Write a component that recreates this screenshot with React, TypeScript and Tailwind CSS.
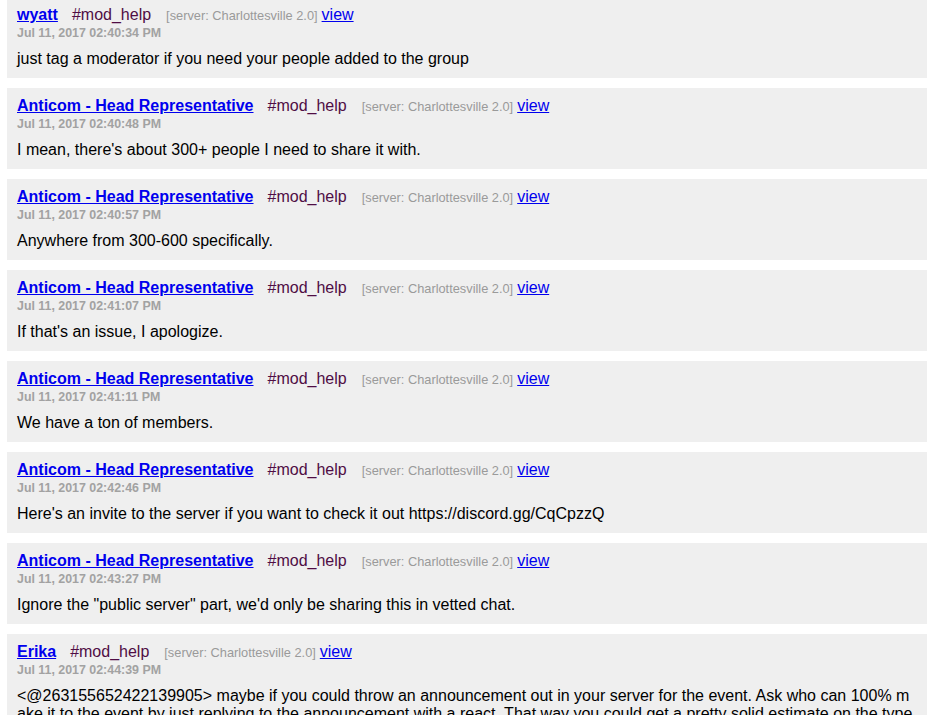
const messages = [
  {
    name: "wyatt",
    time: "Jul 11, 2017 02:40:34 PM",
    text: "just tag a moderator if you need your people added to the group",
  },
  {
    name: "Anticom - Head Representative",
    time: "Jul 11, 2017 02:40:48 PM",
    text: "I mean, there's about 300+ people I need to share it with.",
  },
  {
    name: "Anticom - Head Representative",
    time: "Jul 11, 2017 02:40:57 PM",
    text: "Anywhere from 300-600 specifically.",
  },
  {
    name: "Anticom - Head Representative",
    time: "Jul 11, 2017 02:41:07 PM",
    text: "If that's an issue, I apologize.",
  },
  {
    name: "Anticom - Head Representative",
    time: "Jul 11, 2017 02:41:11 PM",
    text: "We have a ton of members.",
  },
  {
    name: "Anticom - Head Representative",
    time: "Jul 11, 2017 02:42:46 PM",
    text: "Here's an invite to the server if you want to check it out https://discord.gg/CqCpzzQ",
  },
  {
    name: "Anticom - Head Representative",
    time: "Jul 11, 2017 02:43:27 PM",
    text: 'Ignore the "public server" part, we\'d only be sharing this in vetted chat.',
  },
  {
    name: "Erika",
    time: "Jul 11, 2017 02:44:39 PM",
    text: "<@263155652422139905> maybe if you could throw an announcement out in your server for the event. Ask who can 100% make it to the event by just replying to the announcement with a react. That way you could get a pretty solid estimate on the type of numbers you'd be bringing along with you.",
  },
];

export default function App() {
  return (
    <div className="h-[715px] overflow-hidden bg-white font-['Liberation_Sans',Arial,sans-serif] text-black">
      <div className="-mt-[3px] flex flex-col gap-[10px] pl-[7px]">
        {messages.map((m, i) => (
          <Message key={i} {...m} />
        ))}
      </div>
    </div>
  );
}

function Message({ name, time, text }: { name: string; time: string; text: string }) {
  return (
    <div className="w-[920px] bg-[#efefef] pb-[10px] pl-[10px] pr-[10px] pt-[8px]">
      <div className="flex items-baseline whitespace-nowrap leading-[19px]">
        <a href="#" className="text-[16px] font-bold text-[#0000ee] underline">
          {name}
        </a>
        <span className="ml-[14px] text-[16px] text-[#4f0d44]">#mod_help</span>
        <span className="ml-[15px] text-[12.8px] text-[#9a9a9a]">[server: Charlottesville 2.0]</span>
        <a href="#" className="ml-[4px] text-[16px] text-[#0000ee] underline">
          view
        </a>
      </div>
      <div className="mt-[1px] text-[12.4px] font-bold leading-[14px] text-[#a2a2a2]">{time}</div>
      <div className="mt-[10px] break-all text-[16px] leading-[18px]">{text}</div>
    </div>
  );
}
